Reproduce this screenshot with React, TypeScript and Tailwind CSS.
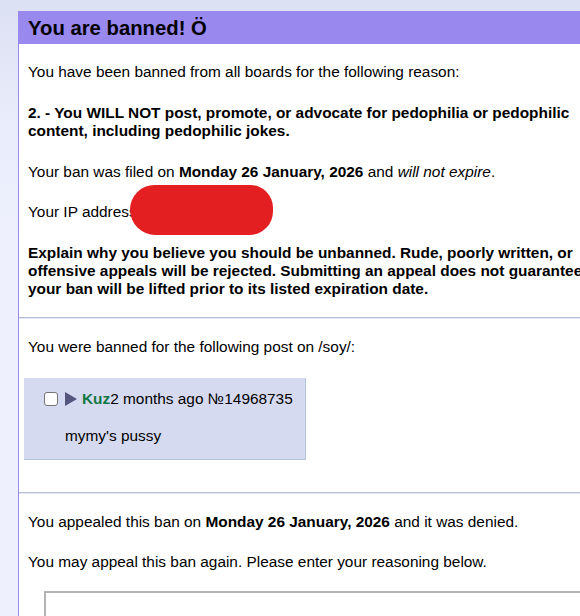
import React from "react";

export default function App() {
  return (
    <div className="w-[580px] h-[616px] overflow-hidden bg-[linear-gradient(to_bottom,#dce0f3_0px,#e9ecfa_120px,#eef1fd_260px)] font-['Liberation_Sans',Arial,sans-serif] text-black">
      <div className="ml-[18px] mt-[11px] w-[592px] border border-[#9988ee] bg-white">
        <h2 className="h-[32px] bg-[#9988ee] pl-[9px] text-[20.3px] font-bold leading-[32px]">
          You are banned! Ö
        </h2>
        <div className="text-[15.4px] leading-[18px]">
          <p className="mt-[19px] px-[9px]">
            You have been banned from all boards for the following reason:
          </p>
          <p className="mt-[23px] px-[9px] font-bold">
            2. - You WILL NOT post, promote, or advocate for pedophilia or pedophilic content, including pedophilic jokes.
          </p>
          <p className="mt-[23px] px-[9px]">
            Your ban was filed on <b>Monday 26 January, 2026</b> and <i>will not expire</i>.
          </p>
          <p className="relative mt-[22px] px-[9px]">
            Your IP address is
            <span className="absolute left-[111px] top-[-18px] h-[50px] w-[143px] rounded-[26px_24px_25px_27px] bg-[#e41f22]" />
          </p>
          <p className="mt-[23px] px-[9px] font-bold">
            Explain why you believe you should be unbanned. Rude, poorly written, or offensive appeals will be rejected. Submitting an appeal does not guarantee your ban will be lifted prior to its listed expiration date.
          </p>
          <div className="mt-[19px] h-[2px] border-t border-[#b9c0da] bg-[#e2e6f3]" />
          <p className="mt-[19px] px-[9px]">
            You were banned for the following post on /soy/:
          </p>
          <div className="ml-[5px] mt-[22px] h-[82px] w-[282px] border-b border-r border-[#b7c5d9] bg-[#d6daf0]">
            <div className="flex items-center pl-[20px] pt-[12px] leading-[18px]">
              <span className="h-[14px] w-[14px] rounded-[3px] border border-[#767676] bg-white" />
              <svg width="13" height="14" viewBox="0 0 13 14" className="ml-[7px]">
                <polygon points="0,0 12,7 0,14" fill="#56557e" />
              </svg>
              <span className="ml-[4px] font-bold text-[#117743]">Kuz</span>
              <span>2 months ago №14968735</span>
            </div>
            <div className="mt-[19px] pl-[41px] leading-[18px]">mymy's pussy</div>
          </div>
          <div className="mt-[32px] h-[2px] border-t border-[#b9c0da] bg-[#e2e6f3]" />
          <p className="mt-[19px] px-[9px]">
            You appealed this ban on <b>Monday 26 January, 2026</b> and it was denied.
          </p>
          <p className="mt-[22px] px-[9px]">
            You may appeal this ban again. Please enter your reasoning below.
          </p>
          <div className="ml-[25px] mt-[20px] h-[120px] w-[560px] border-l-2 border-t-2 border-[#b4b4b4] bg-white" />
        </div>
      </div>
    </div>
  );
}
